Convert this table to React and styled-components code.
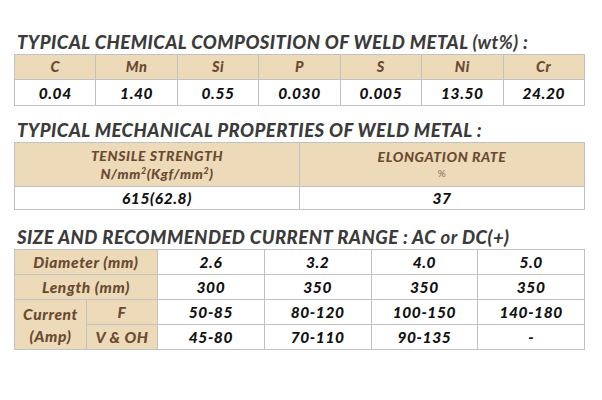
import React from "react";
import styled, { createGlobalStyle } from "styled-components";

const Global = createGlobalStyle`
  html, body { margin: 0; padding: 0; background: #fff; }
  body { font-family: "Lato", "DejaVu Sans", sans-serif; }
`;

const Page = styled.div`
  width: 602px;
  height: 400px;
  padding: 32px 0 0 14px;
  box-sizing: border-box;
  display: flex;
  flex-direction: column;
`;

const Title = styled.h2`
  margin: ${(p) => p.$mt || 0}px 0 2px 3px;
  font-size: 18.5px;
  line-height: 20px;
  font-weight: 900;
  font-style: italic;
  color: #3b3b3b;
  letter-spacing: 0.45px;
  white-space: nowrap;
`;

const Light = styled.span`
  font-weight: 700;
`;

const Table = styled.table`
  width: 571px;
  border-collapse: collapse;
  table-layout: fixed;
  font-style: italic;
  font-weight: 900;
  td, th {
    border: 1px solid #c2c2c2;
    padding: 0;
    text-align: center;
    vertical-align: middle;
  }
`;

const Head = styled.th`
  background: #ecdab9;
  color: #6a4a31;
  font-size: ${(p) => p.$fs || 14}px;
  font-weight: 900;
  height: ${(p) => p.$h || 24}px;
  line-height: ${(p) => p.$lh || 16}px;
  letter-spacing: 0.6px;
`;

const Cell = styled.td`
  background: #fff;
  color: #111;
  font-size: ${(p) => p.$fs || 15.5}px;
  height: ${(p) => p.$h || 24}px;
  line-height: 16px;
  letter-spacing: 0.6px;
`;

const Sup = styled.sup`
  font-size: 9px;
  line-height: 0;
  vertical-align: 5px;
`;

const Pct = styled.span`
  display: block;
  font-size: 10px;
  font-weight: 400;
  font-style: normal;
  color: #8a6a4f;
  line-height: 15px;
`;

const chem = [
  ["C", "0.04"],
  ["Mn", "1.40"],
  ["Si", "0.55"],
  ["P", "0.030"],
  ["S", "0.005"],
  ["Ni", "13.50"],
  ["Cr", "24.20"],
];

const sizes = [
  ["2.6", "300", "50-85", "45-80"],
  ["3.2", "350", "80-120", "70-110"],
  ["4.0", "350", "100-150", "90-135"],
  ["5.0", "350", "140-180", "-"],
];

export default function App() {
  return (
    <>
      <Global />
      <Page>
        <Title>
          TYPICAL CHEMICAL COMPOSITION OF WELD METAL <Light>(wt%)</Light> :
        </Title>
        <Table>
          <thead>
            <tr>
              {chem.map(([k]) => (
                <Head key={k} $fs={14.5}>{k}</Head>
              ))}
            </tr>
          </thead>
          <tbody>
            <tr>
              {chem.map(([k, v]) => (
                <Cell key={k} $h={25}>{v}</Cell>
              ))}
            </tr>
          </tbody>
        </Table>

        <Title $mt={14}>TYPICAL MECHANICAL PROPERTIES OF WELD METAL :</Title>
        <Table>
          <thead>
            <tr>
              <Head $h={43} $fs={14} $lh={18}>
                TENSILE STRENGTH
                <br />
                N/mm<Sup>2</Sup>(Kgf/mm<Sup>2</Sup>)
              </Head>
              <Head $h={43} $fs={14} $lh={18}>
                ELONGATION RATE
                <Pct>%</Pct>
              </Head>
            </tr>
          </thead>
          <tbody>
            <tr>
              <Cell $h={22}>615(62.8)</Cell>
              <Cell $h={22}>37</Cell>
            </tr>
          </tbody>
        </Table>

        <Title $mt={17}>
          SIZE AND RECOMMENDED CURRENT RANGE : AC <Light>or</Light> DC(+)
        </Title>
        <Table>
          <colgroup>
            <col style={{ width: "72px" }} />
            <col style={{ width: "71px" }} />
            <col />
            <col />
            <col />
            <col />
          </colgroup>
          <tbody>
            <tr>
              <Head colSpan={2} $fs={15.5}>Diameter (mm)</Head>
              {sizes.map((s) => (
                <Cell key={s[0]}>{s[0]}</Cell>
              ))}
            </tr>
            <tr>
              <Head colSpan={2} $fs={15.5}>Length (mm)</Head>
              {sizes.map((s, i) => (
                <Cell key={i}>{s[1]}</Cell>
              ))}
            </tr>
            <tr>
              <Head rowSpan={2} $fs={15.5} $lh={22}>
                Current
                <br />
                (Amp)
              </Head>
              <Head $fs={15.5}>F</Head>
              {sizes.map((s, i) => (
                <Cell key={i}>{s[2]}</Cell>
              ))}
            </tr>
            <tr>
              <Head $fs={15.5}>V &amp; OH</Head>
              {sizes.map((s, i) => (
                <Cell key={i}>{s[3]}</Cell>
              ))}
            </tr>
          </tbody>
        </Table>
      </Page>
    </>
  );
}
